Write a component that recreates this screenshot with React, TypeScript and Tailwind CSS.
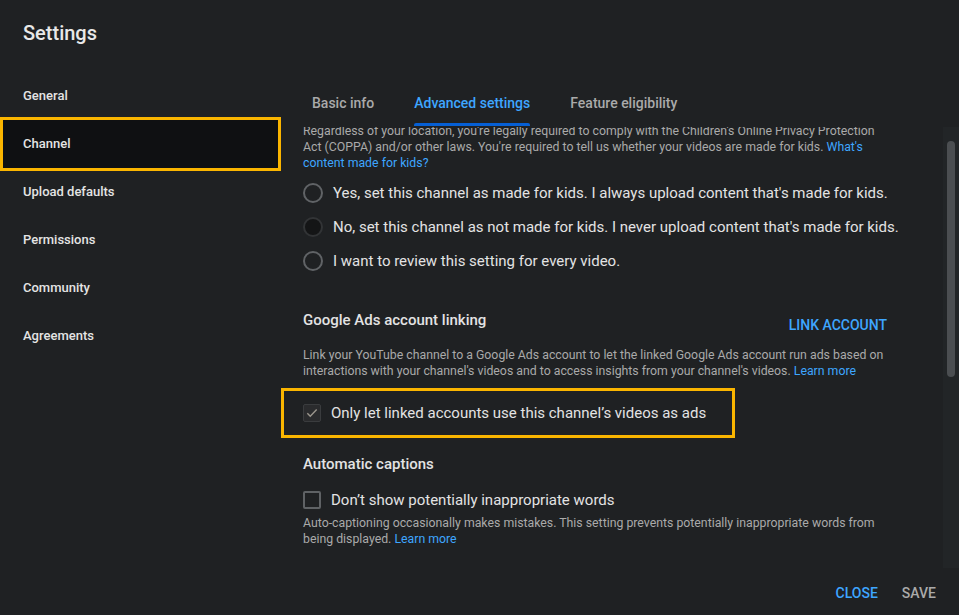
const navItems = ["General", "Channel", "Upload defaults", "Permissions", "Community", "Agreements"];
const tabs = ["Basic info", "Advanced settings", "Feature eligibility"];

const Radio = ({ label, filled }: { label: string; filled?: boolean }) => (
  <div className="flex h-[34px] items-center whitespace-nowrap">
    <span
      className={
        filled
          ? "h-[20px] w-[20px] shrink-0 rounded-full border-2 border-[#323436] bg-[#141516]"
          : "h-[20px] w-[20px] shrink-0 rounded-full border-2 border-[#606366]"
      }
    />
    <span className="ml-[10px] text-[15px] leading-[20px] text-[#e3e3e3]">{label}</span>
  </div>
);

export default function App() {
  return (
    <div className="flex h-[615px] w-[959px] flex-col overflow-hidden bg-[#1f2123] font-['Roboto',sans-serif]">
      {/* header */}
      <div className="flex h-[66px] items-center pl-[23px] text-[20px] font-medium text-[#e8e8e8]">Settings</div>

      <div className="flex flex-1 min-h-0">
        {/* sidebar */}
        <nav className="mt-[6px] flex w-[280px] shrink-0 flex-col">
          {navItems.map((item) =>
            item === "Channel" ? (
              <div
                key={item}
                className="-my-[3px] flex h-[54px] w-[281px] items-center border-[3px] border-[#fab500] bg-[#0f1012] pl-[20px] text-[13px] font-medium text-[#e4e4e4]"
              >
                {item}
              </div>
            ) : (
              <div key={item} className="flex h-[48px] items-center pl-[23px] text-[13px] font-medium text-[#e4e4e4]">
                {item}
              </div>
            )
          )}
        </nav>

        {/* main */}
        <div className="flex min-w-0 flex-1 flex-col">
          <div className="flex h-[61px] shrink-0 gap-[40px] pl-[32px] pt-[27px]">
            {tabs.map((t) => {
              const active = t === "Advanced settings";
              return (
                <div key={t} className="flex flex-col">
                  <span
                    className={
                      active
                        ? "text-[14px] font-medium leading-[20px] text-[#3ea6ff]"
                        : "text-[14px] font-medium leading-[20px] text-[#aaaaaa]"
                    }
                  >
                    {t}
                  </span>
                  <span className={active ? "mt-[10px] h-[3px] rounded-t-[2px] bg-[#065fd4]" : "mt-[10px] h-[3px]"} />
                </div>
              );
            })}
          </div>

          <div className="flex min-h-0 flex-1">
            <div className="min-w-0 flex-1 overflow-hidden pl-[23px]">
              <div className="-mt-[4px] w-[590px]">
                <p className="text-[12.3px] leading-[16px] text-[#aaaaaa]">
                  Regardless of your location, you're legally required to comply with the Children's Online Privacy Protection
                  Act (COPPA) and/or other laws. You're required to tell us whether your videos are made for kids.{" "}
                  <span className="text-[#3ea6ff]">What's content made for kids?</span>
                </p>

                <div className="mt-[5px] flex flex-col">
                  <Radio label="Yes, set this channel as made for kids. I always upload content that's made for kids." />
                  <Radio filled label="No, set this channel as not made for kids. I never upload content that's made for kids." />
                  <Radio label="I want to review this setting for every video." />
                </div>

                <div className="mt-[32px] flex w-[584px] items-start justify-between">
                  <span className="text-[15px] font-medium leading-[20px] text-[#e3e3e3]">Google Ads account linking</span>
                  <span className="mt-[5px] text-[14px] font-medium uppercase leading-[20px] text-[#3ea6ff]">Link account</span>
                </div>

                <p className="mt-[12px] text-[12.3px] leading-[16px] text-[#aaaaaa]">
                  Link your YouTube channel to a Google Ads account to let the linked Google Ads account run ads based on
                  interactions with your channel's videos and to access insights from your channel's videos.{" "}
                  <span className="text-[#3ea6ff]">Learn more</span>
                </p>

                <div className="-ml-[22px] mt-[9px] flex h-[50px] w-[454px] items-center border-[3px] border-[#fab500] pl-[19px]">
                  <span className="flex h-[18px] w-[18px] items-center justify-center rounded-[2px] border border-[#3a3c3e] bg-[#2a2b2d]">
                    <svg width="14" height="14" viewBox="0 0 24 24" fill="none">
                      <path d="M4 12.5l5 5L20 6" stroke="#9b968d" strokeWidth="2.4" />
                    </svg>
                  </span>
                  <span className="ml-[10px] text-[15px] leading-[20px] text-[#e3e3e3]">
                    Only let linked accounts use this channel’s videos as ads
                  </span>
                </div>

                <div className="mt-[16px] text-[15px] font-medium leading-[20px] text-[#e3e3e3]">Automatic captions</div>

                <div className="mt-[14px] flex h-[24px] items-center">
                  <span className="h-[18px] w-[18px] rounded-[2px] border-2 border-[#5f6265]" />
                  <span className="ml-[10px] text-[15px] leading-[20px] text-[#e3e3e3]">Don’t show potentially inappropriate words</span>
                </div>

                <p className="mt-[3px] text-[12.3px] leading-[16px] text-[#aaaaaa]">
                  Auto-captioning occasionally makes mistakes. This setting prevents potentially inappropriate words from
                  being displayed. <span className="text-[#3ea6ff]">Learn more</span>
                </p>
              </div>
            </div>

            {/* scrollbar */}
            <div className="flex w-[16px] shrink-0 justify-center bg-[#222527] pt-[14px]">
              <div className="h-[236px] w-[8px] rounded-full bg-[#4b4e51]" />
            </div>
          </div>
        </div>
      </div>

      {/* footer */}
      <div className="flex h-[47px] shrink-0 items-center justify-end gap-[24px] pr-[23px] pt-[3px] text-[14px] font-medium uppercase">
        <span className="text-[#3ea6ff]">Close</span>
        <span className="text-[#aaaaaa]">Save</span>
      </div>
    </div>
  );
}
